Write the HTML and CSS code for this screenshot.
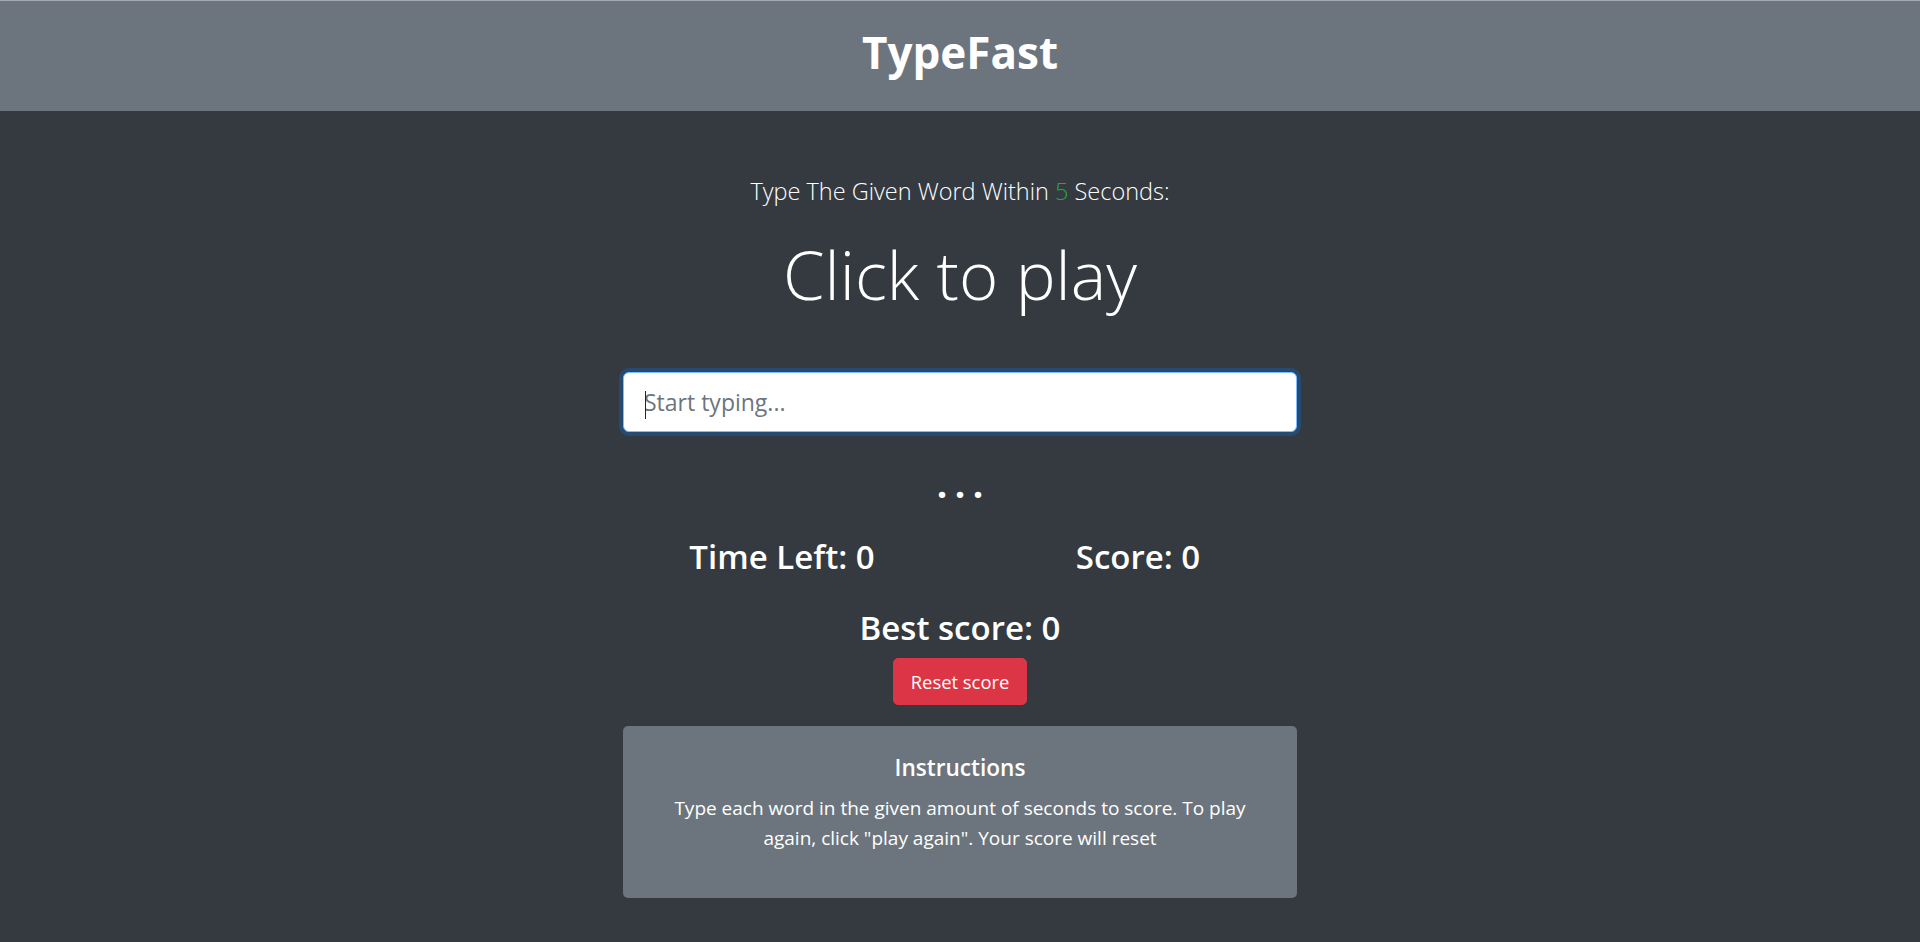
FILE: index.html
```html
<!DOCTYPE html>
<html lang="en">
<head>
<meta charset="utf-8">
<title>TypeFast</title>
<link rel="stylesheet" href="styles.css">
</head>
<body>
<header class="topbar">
  <h1 class="brand">TypeFast</h1>
</header>
<main class="main">
  <div class="container">
    <p class="lead">Type The Given Word Within <span class="secs">5</span> Seconds:</p>
    <h2 class="word">Click to play</h2>
    <div class="input-wrap">
      <input class="word-input" type="text" placeholder="Start typing...">
      <span class="caret"></span>
    </div>
    <h4 class="message"><span>.</span><span>.</span><span>.</span></h4>
    <div class="stats">
      <h3 class="stat">Time Left: <span>0</span></h3>
      <h3 class="stat">Score: <span>0</span></h3>
    </div>
    <h3 class="best">Best score: <span>0</span></h3>
    <div class="btn-row"><button class="btn-reset" type="button">Reset score</button></div>
    <section class="card">
      <h5 class="card-title">Instructions</h5>
      <p class="card-text">Type each word in the given amount of seconds to score. To play again, click "play again". Your score will reset</p>
    </section>
  </div>
</main>
</body>
</html>
```
FILE: styles.css
```css
* { box-sizing: border-box; }
html, body { margin: 0; padding: 0; }
body {
  font-family: "Open Sans", "Noto Sans", sans-serif;
  background: #343a40;
  color: #fff;
  min-height: 100vh;
}
.topbar {
  background: #6c757d;
  border-top: 1px solid #a3a9ae;
  padding: 21px 0 29px;
  text-align: center;
}
.brand {
  margin: 0;
  font-size: 44px;
  font-weight: 700;
  line-height: 60px;
  color: #fff;
}
.main {
  padding-top: 62px;
  padding-bottom: 40px;
}
.container {
  width: 674px;
  margin: 0 auto;
  text-align: center;
}
.lead {
  margin: 0;
  font-size: 23.5px;
  font-weight: 300;
  line-height: 36px;
}
.secs { color: #28a745; }
.word {
  margin: 25px 0 0;
  font-size: 67px;
  font-weight: 300;
  line-height: 80px;
}
.input-wrap {
  position: relative;
  margin-top: 58px;
}
.word-input {
  display: block;
  width: 674px;
  height: 60px;
  margin: 0;
  padding: 0 20px;
  font-family: "Open Sans", "Noto Sans", sans-serif;
  font-size: 23px;
  color: #495057;
  background: #fff;
  border: 1px solid #80bdff;
  border-radius: 6px;
  box-shadow: 0 0 0 4px rgba(0, 123, 255, 0.27);
  outline: none;
}
.word-input::placeholder { color: #6c757d; opacity: 1; }
.caret {
  position: absolute;
  left: 22px;
  top: 19px;
  width: 1px;
  height: 28px;
  background: #212529;
}
.message {
  margin: 32px 0 0;
  display: flex;
  justify-content: center;
  font-size: 37px;
  font-weight: 700;
  line-height: 40px;
}
.message span { width: 18px; text-align: center; }
.stats {
  display: grid;
  grid-template-columns: 1fr 1fr;
  margin: 33px -19px 0;
}
.stat, .best {
  margin: 0;
  font-size: 33px;
  font-weight: 600;
  line-height: 40px;
}
.best { margin-top: 31px; }
.btn-row {
  margin-top: 10.4px;
  display: flex;
  justify-content: center;
}
.btn-reset {
  height: 47px;
  padding: 0 17px;
  font-family: "Open Sans", "Noto Sans", sans-serif;
  font-size: 18.4px;
  line-height: 45px;
  color: #fff;
  background: #dc3545;
  border: 1px solid #dc3545;
  border-radius: 5px;
}
.card {
  margin-top: 21px;
  background: #6c757d;
  border-radius: 5px;
  padding: 28px 30px 45px;
}
.card-title {
  margin: 0;
  font-size: 22.6px;
  font-weight: 600;
  line-height: 28px;
}
.card-text {
  margin: 10.5px 0 0;
  font-size: 19px;
  line-height: 30px;
}
```
